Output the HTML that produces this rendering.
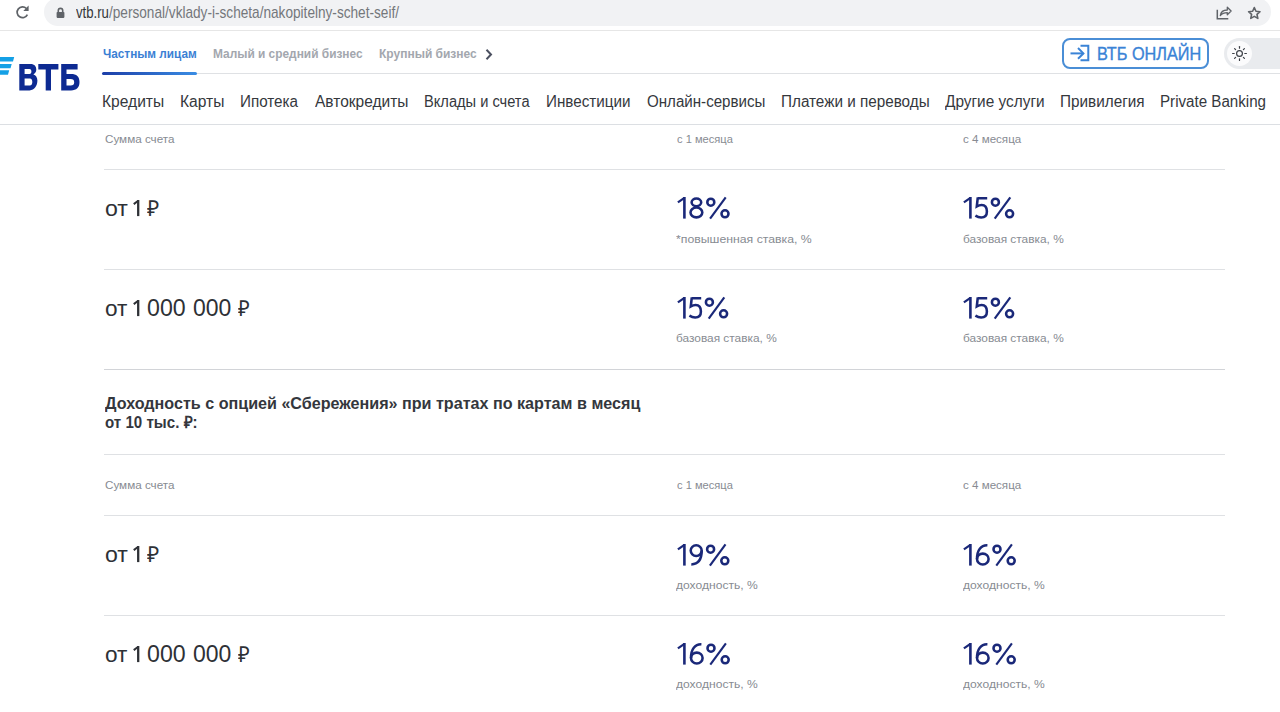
<!DOCTYPE html>
<html><head><meta charset="utf-8">
<style>
html,body{margin:0;padding:0;background:#fff;width:1280px;height:712px;overflow:hidden;position:relative;font-family:"Liberation Sans",sans-serif;}
.t{position:absolute;white-space:nowrap;transform-origin:0 0;}
.bt{-webkit-text-stroke:0.35px #3a83d6;}
.ln{position:absolute;height:1px;background:#dfe1e4;}
.abs{position:absolute;}
</style></head><body>
<!-- browser chrome -->
<div class="abs" style="left:44px;top:-2px;width:1227px;height:27.5px;border-radius:14px;background:#f1f2f4;"></div>
<div class="abs" style="left:0;top:30px;width:1280px;height:1px;background:#e6e6e6;"></div>
<svg class="abs" style="left:14px;top:4px" width="18" height="18" viewBox="0 0 18 18">
  <path d="M12.4 4.5 A5.4 5.4 0 1 0 13.4 10.6" fill="none" stroke="#5f6368" stroke-width="1.7"/>
  <path d="M14.6 1.6 L14.6 6.9 L9.3 6.9 Z" fill="#5f6368"/>
</svg>
<svg class="abs" style="left:55px;top:7px" width="11" height="12" viewBox="0 0 11 12">
  <path d="M3.3 5 V3.6 A2.2 2.2 0 0 1 7.7 3.6 V5" fill="none" stroke="#5f6368" stroke-width="1.6"/>
  <rect x="1.6" y="4.9" width="7.8" height="6" rx="0.8" fill="#5f6368"/>
</svg>
<svg class="abs" style="left:1215px;top:5px" width="18" height="16" viewBox="0 0 18 16">
  <path d="M2.3 4.8 V13.75 H13.3" fill="none" stroke="#5f6368" stroke-width="1.5"/>
  <path d="M5.3 10.6 C5.8 7 8.5 5 12.3 5 V2.2 L16.1 6 L12.3 9.8 V7.6 C9.5 7.6 7 8.5 5.3 10.6 Z" fill="none" stroke="#5f6368" stroke-width="1.3" stroke-linejoin="round"/>
</svg>
<svg class="abs" style="left:1246px;top:4.5px" width="16" height="16" viewBox="0 0 16 16">
  <path d="M8.30 2.54 L9.96 6.26 L14.01 6.69 L10.98 9.41 L11.83 13.39 L8.30 11.36 L4.77 13.39 L5.62 9.41 L2.59 6.69 L6.64 6.26 Z" fill="none" stroke="#5f6368" stroke-width="1.6" stroke-linejoin="round"/>
</svg>

<!-- logo -->
<svg class="abs" style="left:0;top:56px" width="82" height="36" viewBox="0 56 82 36">
  <path d="M0 57 H14.2 L13 61.6 H0 Z" fill="#14a0e6"/>
  <path d="M0 64 H11.7 L10.5 68.3 H0 Z" fill="#14a0e6"/>
  <path d="M0 70.3 H9.2 L8 74.8 H0 Z" fill="#14a0e6"/>
  <path fill="#0d2a92" fill-rule="evenodd" d="M19.3 64 H30.5 C34.5 64 36.3 66.4 36.3 69.6 C36.3 72 35 73.6 33.4 74.4 C35.8 75.1 37.4 77.2 37.4 80.6 C37.4 85.6 34.5 90.4 29.6 90.4 H19.3 Z M24.6 69 V73.9 H29.5 C30.9 73.9 31.4 72.9 31.4 71.5 C31.4 70 30.9 69 29.5 69 Z M24.6 78.6 V85.4 H29.8 C31.6 85.4 32.3 84 32.3 82 C32.3 80 31.6 78.6 29.8 78.6 Z"/>
  <path fill="#0d2a92" d="M38.3 64 H58.4 V69.4 H51 V90.4 H45.7 V69.4 H38.3 Z"/>
  <path fill="#0d2a92" fill-rule="evenodd" d="M61.2 64 H77.6 V69.4 H66.5 V74 H71 C76.5 74 79.5 76.6 79.5 82.1 C79.5 87.7 76.5 90.4 71 90.4 H61.2 Z M66.5 79 V85.4 H70.6 C73.1 85.4 74.2 84.3 74.2 82.2 C74.2 80.1 73.1 79 70.6 79 Z"/>
</svg>

<!-- top nav underline -->
<div class="abs" style="left:102px;top:73px;width:1178px;height:1px;background:#dfe1e4;"></div>
<div class="abs" style="left:102px;top:72px;width:95px;height:3px;border-radius:1.5px;background:linear-gradient(90deg,#1c3ea8,#3a8de4);"></div>
<svg class="abs" style="left:484px;top:48px" width="10" height="13" viewBox="0 0 10 13">
  <path d="M2.5 1.8 L7 6.5 L2.5 11.2" fill="none" stroke="#4b5060" stroke-width="2"/>
</svg>

<!-- button -->
<div class="abs" style="left:1061.5px;top:37.5px;width:147px;height:31px;box-sizing:border-box;border:2px solid #4a8ed6;border-radius:8px;"></div>
<svg class="abs" style="left:1069px;top:44px" width="22" height="19" viewBox="0 0 22 19">
  <path d="M1.5 9.4 H14.2" fill="none" stroke="#3a83d6" stroke-width="2"/>
  <path d="M9 4 L14.4 9.4 L9 14.8" fill="none" stroke="#3a83d6" stroke-width="2"/>
  <path d="M11.5 1.8 H19.3 V16.2 H11.5" fill="none" stroke="#3a83d6" stroke-width="2"/>
</svg>

<!-- theme toggle -->
<div class="abs" style="left:1224px;top:38px;width:80px;height:31px;border-radius:15.5px;background:#e9ebee;"></div>
<div class="abs" style="left:1227px;top:41px;width:25px;height:25px;border-radius:50%;background:#fbfbfc;"></div>
<svg class="abs" style="left:1230px;top:44px" width="19" height="19" viewBox="0 0 19 19">
  <circle cx="9.5" cy="9.5" r="2.9" fill="none" stroke="#3b3f46" stroke-width="1.2"/>
  <g stroke="#3b3f46" stroke-width="1.2" stroke-linecap="round">
    <path d="M9.5 2.6 V4.2"/><path d="M9.5 14.8 V16.4"/><path d="M2.6 9.5 H4.2"/><path d="M14.8 9.5 H16.4"/>
    <path d="M4.6 4.6 L5.6 5.6"/><path d="M13.4 13.4 L14.4 14.4"/><path d="M4.6 14.4 L5.6 13.4"/><path d="M13.4 5.6 L14.4 4.6"/>
  </g>
</svg>

<!-- header bottom line -->
<div class="abs" style="left:0;top:124px;width:1280px;height:1px;background:#dcdfe3;"></div>

<!-- table lines -->
<div class="ln" style="left:104px;top:169px;width:1121px;"></div>
<div class="ln" style="left:104px;top:269px;width:1121px;"></div>
<div class="ln" style="left:104px;top:369px;width:1121px;background:#d2d4d8;"></div>
<div class="ln" style="left:104px;top:454px;width:1121px;"></div>
<div class="ln" style="left:104px;top:515px;width:1121px;"></div>
<div class="ln" style="left:104px;top:615px;width:1121px;"></div>

<div class="t" style="left:76.00px;top:2.60px;font-size:17px;line-height:19px;font-weight:400;color:#35373a;transform:scaleX(0.7750)">vtb.ru</div>
<div class="t" style="left:109.00px;top:2.60px;font-size:17px;line-height:19px;font-weight:400;color:#74777b;transform:scaleX(0.8013)">/personal/vklady-i-scheta/nakopitelny-schet-seif/</div>
<div class="t" style="left:102.75px;top:46.80px;font-size:11.9px;line-height:14px;font-weight:700;color:#3b7fd4;transform:scaleX(0.9902)">Частным лицам</div>
<div class="t" style="left:212.50px;top:46.80px;font-size:11.9px;line-height:14px;font-weight:700;color:#a3a7ae;transform:scaleX(1.0004)">Малый и средний бизнес</div>
<div class="t" style="left:378.75px;top:46.80px;font-size:11.9px;line-height:14px;font-weight:700;color:#a3a7ae;transform:scaleX(1.0086)">Крупный бизнес</div>
<div class="t bt" style="left:1096.57px;top:43.60px;font-size:17.5px;line-height:20px;font-weight:400;color:#3a83d6;transform:scaleX(0.9292)">ВТБ ОНЛАЙН</div>
<div class="t" style="left:102.43px;top:92.80px;font-size:16px;line-height:17px;font-weight:400;color:#35383d;transform:scaleX(0.9733)">Кредиты</div>
<div class="t" style="left:180.18px;top:92.80px;font-size:16px;line-height:17px;font-weight:400;color:#35383d;transform:scaleX(0.9741)">Карты</div>
<div class="t" style="left:240.20px;top:92.80px;font-size:16px;line-height:17px;font-weight:400;color:#35383d;transform:scaleX(0.9516)">Ипотека</div>
<div class="t" style="left:315.40px;top:92.80px;font-size:16px;line-height:17px;font-weight:400;color:#35383d;transform:scaleX(0.9691)">Автокредиты</div>
<div class="t" style="left:424.48px;top:92.80px;font-size:16px;line-height:17px;font-weight:400;color:#35383d;transform:scaleX(0.9150)">Вклады и счета</div>
<div class="t" style="left:546.45px;top:92.80px;font-size:16px;line-height:17px;font-weight:400;color:#35383d;transform:scaleX(0.9514)">Инвестиции</div>
<div class="t" style="left:647.15px;top:92.80px;font-size:16px;line-height:17px;font-weight:400;color:#35383d;transform:scaleX(0.9447)">Онлайн-сервисы</div>
<div class="t" style="left:780.70px;top:92.80px;font-size:16px;line-height:17px;font-weight:400;color:#35383d;transform:scaleX(0.9541)">Платежи и переводы</div>
<div class="t" style="left:945.40px;top:92.80px;font-size:16px;line-height:17px;font-weight:400;color:#35383d;transform:scaleX(0.9614)">Другие услуги</div>
<div class="t" style="left:1060.04px;top:92.80px;font-size:16px;line-height:17px;font-weight:400;color:#35383d;transform:scaleX(0.9564)">Привилегия</div>
<div class="t" style="left:1160.45px;top:92.80px;font-size:16px;line-height:17px;font-weight:400;color:#35383d;transform:scaleX(0.9459)">Private Banking</div>
<div class="t" style="left:104.60px;top:133.20px;font-size:11.0px;line-height:12px;font-weight:400;color:#878b92;transform:scaleX(1.0603)">Сумма счета</div>
<div class="t" style="left:676.60px;top:133.00px;font-size:10.8px;line-height:12px;font-weight:400;color:#878b92;transform:scaleX(1.0302)">с 1 месяца</div>
<div class="t" style="left:962.50px;top:133.00px;font-size:10.8px;line-height:12px;font-weight:400;color:#878b92;transform:scaleX(1.0726)">с 4 месяца</div>
<div class="t" style="left:105.20px;top:195.90px;font-size:22.3px;line-height:25px;font-weight:400;color:#2e3136;transform:scaleX(1.0360)">от</div>
<div class="t" style="left:146.50px;top:195.80px;font-size:22px;line-height:25px;font-weight:400;color:#2e3136;transform:scaleX(0.9583)">₽</div>
<div class="t" style="left:105.40px;top:295.60px;font-size:22.3px;line-height:25px;font-weight:400;color:#2e3136;transform:scaleX(1.0132)">от</div>
<div class="t" style="left:147.10px;top:293.60px;font-size:24px;line-height:27px;font-weight:400;color:#2e3136;transform:scaleX(0.9648)">000</div>
<div class="t" style="left:193.20px;top:293.60px;font-size:24px;line-height:27px;font-weight:400;color:#2e3136;transform:scaleX(0.9573)">000</div>
<div class="t" style="left:238.00px;top:295.60px;font-size:22px;line-height:25px;font-weight:400;color:#2e3136;transform:scaleX(0.9167)">₽</div>
<div class="t" style="left:676.40px;top:231.60px;font-size:11.8px;line-height:14px;font-weight:400;color:#878b92;transform:scaleX(1.0397)">*повышенная ставка, %</div>
<div class="t" style="left:962.50px;top:231.60px;font-size:11.8px;line-height:14px;font-weight:400;color:#878b92;transform:scaleX(1.0055)">базовая ставка, %</div>
<div class="t" style="left:676.40px;top:331.30px;font-size:11.8px;line-height:14px;font-weight:400;color:#878b92;transform:scaleX(1.0055)">базовая ставка, %</div>
<div class="t" style="left:962.50px;top:331.30px;font-size:11.8px;line-height:14px;font-weight:400;color:#878b92;transform:scaleX(1.0055)">базовая ставка, %</div>
<div class="t" style="left:104.60px;top:479.20px;font-size:11.0px;line-height:12px;font-weight:400;color:#878b92;transform:scaleX(1.0603)">Сумма счета</div>
<div class="t" style="left:676.60px;top:479.00px;font-size:10.8px;line-height:12px;font-weight:400;color:#878b92;transform:scaleX(1.0302)">с 1 месяца</div>
<div class="t" style="left:962.50px;top:479.00px;font-size:10.8px;line-height:12px;font-weight:400;color:#878b92;transform:scaleX(1.0726)">с 4 месяца</div>
<div class="t" style="left:105.20px;top:541.90px;font-size:22.3px;line-height:25px;font-weight:400;color:#2e3136;transform:scaleX(1.0360)">от</div>
<div class="t" style="left:146.50px;top:541.80px;font-size:22px;line-height:25px;font-weight:400;color:#2e3136;transform:scaleX(0.9583)">₽</div>
<div class="t" style="left:105.40px;top:641.60px;font-size:22.3px;line-height:25px;font-weight:400;color:#2e3136;transform:scaleX(1.0132)">от</div>
<div class="t" style="left:147.10px;top:639.60px;font-size:24px;line-height:27px;font-weight:400;color:#2e3136;transform:scaleX(0.9648)">000</div>
<div class="t" style="left:193.20px;top:639.60px;font-size:24px;line-height:27px;font-weight:400;color:#2e3136;transform:scaleX(0.9573)">000</div>
<div class="t" style="left:238.00px;top:641.60px;font-size:22px;line-height:25px;font-weight:400;color:#2e3136;transform:scaleX(0.9167)">₽</div>
<div class="t" style="left:676.40px;top:577.60px;font-size:11.8px;line-height:14px;font-weight:400;color:#878b92;transform:scaleX(1.0231)">доходность, %</div>
<div class="t" style="left:962.50px;top:577.60px;font-size:11.8px;line-height:14px;font-weight:400;color:#878b92;transform:scaleX(1.0231)">доходность, %</div>
<div class="t" style="left:676.40px;top:677.30px;font-size:11.8px;line-height:14px;font-weight:400;color:#878b92;transform:scaleX(1.0231)">доходность, %</div>
<div class="t" style="left:962.50px;top:677.30px;font-size:11.8px;line-height:14px;font-weight:400;color:#878b92;transform:scaleX(1.0231)">доходность, %</div>
<div class="t" style="left:104.80px;top:393.60px;font-size:16.8px;line-height:19px;font-weight:700;color:#34373d;transform:scaleX(0.9607)">Доходность с опцией «Сбережения» при тратах по картам в месяц</div>
<div class="t" style="left:104.80px;top:412.70px;font-size:16.8px;line-height:19px;font-weight:700;color:#34373d;transform:scaleX(0.9007)">от 10 тыс. ₽:</div>
<svg class="abs" style="left:133.0px;top:199.8px;overflow:visible" width="9" height="17" viewBox="0 0 9 17"><g fill="none" stroke="#2e3136"><path d="M0.75 4.1 L5.2 0.75" stroke-width="2.0"/><path d="M5.2 0 V16.1" stroke-width="2.3"/></g></svg>
<svg class="abs" style="left:133.2px;top:299.6px;overflow:visible" width="9" height="17" viewBox="0 0 9 17"><g fill="none" stroke="#2e3136"><path d="M0.75 4.1 L5.2 0.75" stroke-width="2.0"/><path d="M5.2 0 V16.1" stroke-width="2.3"/></g></svg>
<svg class="abs" style="left:676.8px;top:197.1px;overflow:visible" width="56" height="23" viewBox="0 0 56 23"><g fill="none" stroke="#1a2879" stroke-width="2.55"><path d="M0.9 5.4 L7.4 0.9" stroke-width="2.25"/><path d="M7.4 0 V21.6" stroke-width="2.6"/><ellipse cx="19.4" cy="5.35" rx="4.8" ry="3.85"/><ellipse cx="19.4" cy="15.45" rx="5.9" ry="4.9"/><circle cx="33.8" cy="5.2" r="3.5"/><path d="M48.699999999999996 0.3 L33.099999999999994 21.6" stroke-width="2.15"/><circle cx="48.0" cy="16.8" r="3.5"/></g></svg>
<svg class="abs" style="left:963.0px;top:197.1px;overflow:visible" width="56" height="23" viewBox="0 0 56 23"><g fill="none" stroke="#1a2879" stroke-width="2.55"><path d="M0.9 5.4 L7.4 0.9" stroke-width="2.25"/><path d="M7.4 0 V21.6" stroke-width="2.6"/><path d="M14.8 1.3 H24.200000000000003 M14.8 0.3 L13.8 9.4 C15.600000000000001 8.3 17.0 7.9 18.6 7.9 C22.200000000000003 7.9 23.9 10.6 23.9 14.4 C23.9 18.4 21.6 20.4 18.2 20.4 C16.2 20.4 14.3 19.8 12.4 18.6"/><circle cx="32.4" cy="5.2" r="3.5"/><path d="M47.3 0.3 L31.7 21.6" stroke-width="2.15"/><circle cx="46.599999999999994" cy="16.8" r="3.5"/></g></svg>
<svg class="abs" style="left:676.8px;top:296.8px;overflow:visible" width="56" height="23" viewBox="0 0 56 23"><g fill="none" stroke="#1a2879" stroke-width="2.55"><path d="M0.9 5.4 L7.4 0.9" stroke-width="2.25"/><path d="M7.4 0 V21.6" stroke-width="2.6"/><path d="M14.8 1.3 H24.200000000000003 M14.8 0.3 L13.8 9.4 C15.600000000000001 8.3 17.0 7.9 18.6 7.9 C22.200000000000003 7.9 23.9 10.6 23.9 14.4 C23.9 18.4 21.6 20.4 18.2 20.4 C16.2 20.4 14.3 19.8 12.4 18.6"/><circle cx="32.4" cy="5.2" r="3.5"/><path d="M47.3 0.3 L31.7 21.6" stroke-width="2.15"/><circle cx="46.599999999999994" cy="16.8" r="3.5"/></g></svg>
<svg class="abs" style="left:963.0px;top:296.8px;overflow:visible" width="56" height="23" viewBox="0 0 56 23"><g fill="none" stroke="#1a2879" stroke-width="2.55"><path d="M0.9 5.4 L7.4 0.9" stroke-width="2.25"/><path d="M7.4 0 V21.6" stroke-width="2.6"/><path d="M14.8 1.3 H24.200000000000003 M14.8 0.3 L13.8 9.4 C15.600000000000001 8.3 17.0 7.9 18.6 7.9 C22.200000000000003 7.9 23.9 10.6 23.9 14.4 C23.9 18.4 21.6 20.4 18.2 20.4 C16.2 20.4 14.3 19.8 12.4 18.6"/><circle cx="32.4" cy="5.2" r="3.5"/><path d="M47.3 0.3 L31.7 21.6" stroke-width="2.15"/><circle cx="46.599999999999994" cy="16.8" r="3.5"/></g></svg>
<svg class="abs" style="left:133.0px;top:545.8px;overflow:visible" width="9" height="17" viewBox="0 0 9 17"><g fill="none" stroke="#2e3136"><path d="M0.75 4.1 L5.2 0.75" stroke-width="2.0"/><path d="M5.2 0 V16.1" stroke-width="2.3"/></g></svg>
<svg class="abs" style="left:133.2px;top:645.6px;overflow:visible" width="9" height="17" viewBox="0 0 9 17"><g fill="none" stroke="#2e3136"><path d="M0.75 4.1 L5.2 0.75" stroke-width="2.0"/><path d="M5.2 0 V16.1" stroke-width="2.3"/></g></svg>
<svg class="abs" style="left:676.8px;top:543.5px;overflow:visible" width="56" height="23" viewBox="0 0 56 23"><g fill="none" stroke="#1a2879" stroke-width="2.55"><path d="M0.9 5.4 L7.4 0.9" stroke-width="2.25"/><path d="M7.4 0 V21.6" stroke-width="2.6"/><ellipse cx="19.2" cy="6.6" rx="5.5" ry="5.3"/><path d="M24.7 6.6 C24.7 15.6 20.7 20.3 14.299999999999999 20.4"/><circle cx="33.6" cy="5.2" r="3.5"/><path d="M48.5 0.3 L32.9 21.6" stroke-width="2.15"/><circle cx="47.8" cy="16.8" r="3.5"/></g></svg>
<svg class="abs" style="left:963.0px;top:543.5px;overflow:visible" width="56" height="23" viewBox="0 0 56 23"><g fill="none" stroke="#1a2879" stroke-width="2.55"><path d="M0.9 5.4 L7.4 0.9" stroke-width="2.25"/><path d="M7.4 0 V21.6" stroke-width="2.6"/><ellipse cx="19.8" cy="15" rx="5.8" ry="5.4"/><path d="M14.0 15 C14.0 6 18.0 1.1 24.4 1.3"/><circle cx="34.0" cy="5.2" r="3.5"/><path d="M48.9 0.3 L33.3 21.6" stroke-width="2.15"/><circle cx="48.2" cy="16.8" r="3.5"/></g></svg>
<svg class="abs" style="left:676.8px;top:643.2px;overflow:visible" width="56" height="23" viewBox="0 0 56 23"><g fill="none" stroke="#1a2879" stroke-width="2.55"><path d="M0.9 5.4 L7.4 0.9" stroke-width="2.25"/><path d="M7.4 0 V21.6" stroke-width="2.6"/><ellipse cx="19.8" cy="15" rx="5.8" ry="5.4"/><path d="M14.0 15 C14.0 6 18.0 1.1 24.4 1.3"/><circle cx="34.0" cy="5.2" r="3.5"/><path d="M48.9 0.3 L33.3 21.6" stroke-width="2.15"/><circle cx="48.2" cy="16.8" r="3.5"/></g></svg>
<svg class="abs" style="left:963.0px;top:643.2px;overflow:visible" width="56" height="23" viewBox="0 0 56 23"><g fill="none" stroke="#1a2879" stroke-width="2.55"><path d="M0.9 5.4 L7.4 0.9" stroke-width="2.25"/><path d="M7.4 0 V21.6" stroke-width="2.6"/><ellipse cx="19.8" cy="15" rx="5.8" ry="5.4"/><path d="M14.0 15 C14.0 6 18.0 1.1 24.4 1.3"/><circle cx="34.0" cy="5.2" r="3.5"/><path d="M48.9 0.3 L33.3 21.6" stroke-width="2.15"/><circle cx="48.2" cy="16.8" r="3.5"/></g></svg>
</body></html>
